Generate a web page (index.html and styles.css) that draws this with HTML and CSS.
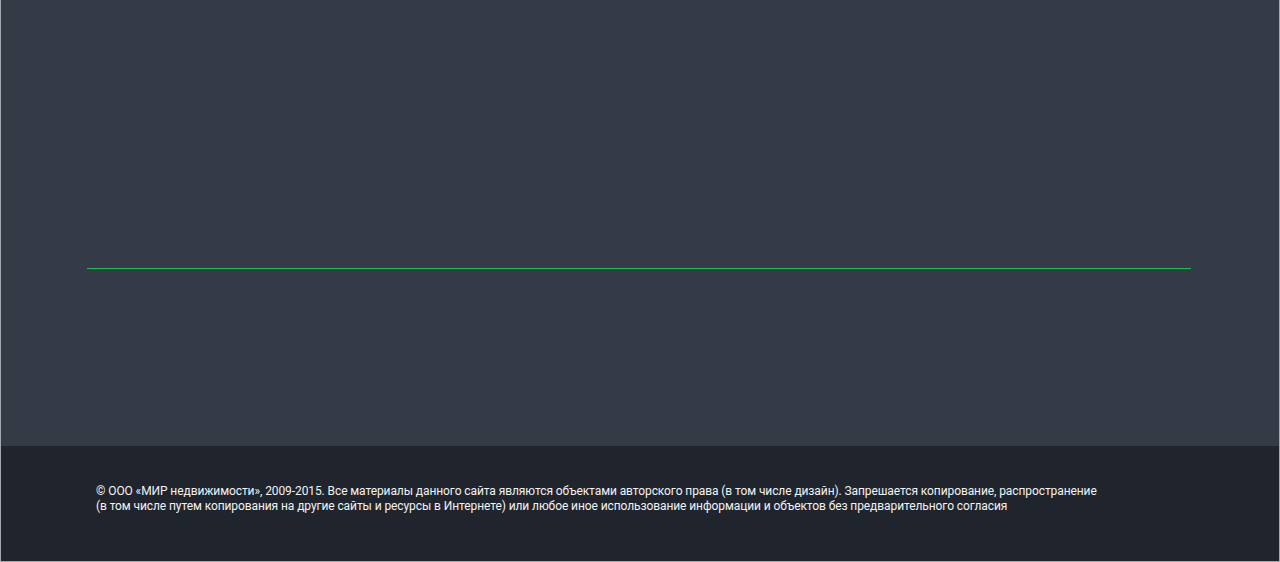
FILE: index.html
```html
<!DOCTYPE html>
<html lang="ru">
<head>
    <meta charset="UTF-8">
    <meta name="viewport" content="width=device-width, initial-scale=1.0">
    <title>МИР недвижимости</title>
    <link rel="stylesheet" href="styles.css">
</head>
<body>
    <div class="page">
        <div class="main">
            <div class="divider"></div>
        </div>
        <footer class="footer">
            <p class="copyright">© ООО «МИР недвижимости», 2009-2015. Все материалы данного сайта являются объектами авторского права (в том числе дизайн). Запрешается копирование, распространение<br>(в том числе путем копирования на другие сайты и ресурсы в Интернете) или любое иное использование информации и объектов без предварительного согласия</p>
        </footer>
    </div>
</body>
</html>
```

FILE: styles.css
```css
body {
    margin: 0;
    font-family: 'Roboto', 'Liberation Sans', sans-serif;
    background-color: #ffffff;
}

.page {
    height: 561px;
    border: 1px solid #a4a7ad;
    border-top: none;
    display: flex;
    flex-direction: column;
}

.main {
    height: 446px;
    flex-shrink: 0;
    background-color: #343a46;
    padding: 268px 88px 0 86px;
    box-sizing: border-box;
}

.divider {
    height: 0;
    border-top: 1px solid #19c24f;
}

.footer {
    flex: 1;
    background-color: #20252d;
    padding: 38px 95px 0;
}

.copyright {
    margin: 0;
    font-size: 12px;
    line-height: 15px;
    color: #f2f2f2;
    letter-spacing: -0.09px;
}
```
